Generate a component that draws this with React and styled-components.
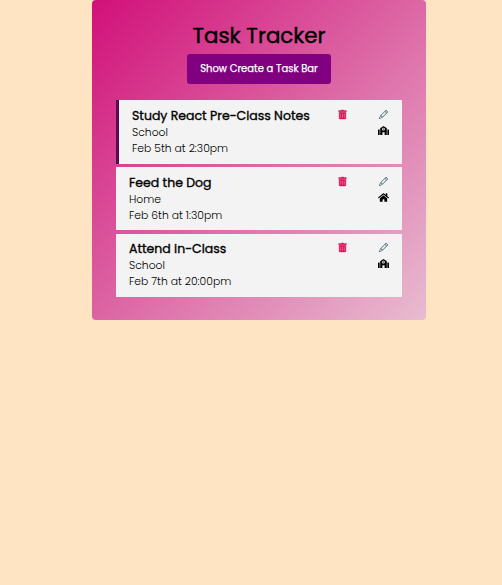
import React from "react";
import styled, { createGlobalStyle } from "styled-components";
import { FaTrashAlt, FaSchool, FaHome } from "react-icons/fa";
import { BsPencil } from "react-icons/bs";

const GlobalStyle = createGlobalStyle`
  * { box-sizing: border-box; }
  body {
    margin: 0;
    background: #ffe4c4;
    font-family: Poppins, Inter, sans-serif;
    color: #000;
  }
`;

const Container = styled.main`
  width: 334px;
  height: 320px;
  margin-left: 92px;
  padding: 20px 24px 0;
  border-radius: 4px;
  background: linear-gradient(135deg, #d11079 0%, #e8bcd0 100%);
`;

const Header = styled.header`
  display: flex;
  flex-direction: column;
  align-items: center;
  height: 80px;
`;

const Title = styled.h1`
  margin: 0;
  height: 34px;
  font-size: 21.4px;
  line-height: 32px;
  font-weight: 400;
  -webkit-text-stroke: 0.4px currentColor;
  white-space: nowrap;
`;

const ToggleButton = styled.button`
  width: 144px;
  height: 30px;
  padding: 0;
  border: 0;
  border-radius: 3px;
  background: #800080;
  color: #fff;
  font: 400 10px/30px Poppins, Inter, sans-serif;
  -webkit-text-stroke: 0.25px currentColor;
  white-space: nowrap;
`;

const TaskList = styled.section`
  display: flex;
  flex-direction: column;
`;

const TaskRow = styled.article`
  display: flex;
  height: ${(p) => (p.$reminder ? 64 : 63)}px;
  margin-bottom: ${(p) => (p.$reminder ? 3 : 4)}px;
  padding: 8px 13px;
  border-left: ${(p) => (p.$reminder ? "3px solid #5a0b50" : "0")};
  background: #f3f3f3;

  &:last-child {
    padding-top: 7px;
  }
`;

const Details = styled.div`
  flex: 1;
  white-space: nowrap;
`;

const TaskName = styled.h3`
  margin: 0 0 1px;
  font-size: 12.5px;
  line-height: 16px;
  font-weight: 400;
  -webkit-text-stroke: 0.35px currentColor;
`;

const Detail = styled.p`
  margin: 0;
  font-size: 10.8px;
  line-height: 16px;
  font-weight: 300;
  color: #000;
`;

const DeleteIcon = styled(FaTrashAlt)`
  width: 9px;
  height: 9px;
  margin: ${(p) => (p.$reminder ? 2 : 1.5)}px 31px 0 0;
  color: #dc1458;
  stroke: currentColor;
  stroke-width: 22px;
  overflow: visible;
`;

const Actions = styled.div`
  display: flex;
  flex-direction: column;
  align-items: center;
  gap: 6px;
  width: 11px;
  padding-top: 2px;
  svg { flex: none; }
`;

const EditIcon = styled(BsPencil)`
  width: 9px;
  height: 9px;
  color: #2c5563;
`;

const tasks = [
  { name: "Study React Pre-Class Notes", place: "School", time: "Feb 5th at 2:30pm", Icon: FaSchool, reminder: true },
  { name: "Feed the Dog", place: "Home", time: "Feb 6th at 1:30pm", Icon: FaHome },
  { name: "Attend in-Class", place: "School", time: "Feb 7th at 20:00pm", Icon: FaSchool },
];

function Task({ task }) {
  const { Icon } = task;
  return (
    <TaskRow $reminder={task.reminder}>
      <Details>
        <TaskName>{task.name}</TaskName>
        <Detail>{task.place}</Detail>
        <Detail>{task.time}</Detail>
      </Details>
      <DeleteIcon $reminder={task.reminder} />
      <Actions>
        <EditIcon />
        <Icon size={11} />
      </Actions>
    </TaskRow>
  );
}

export default function App() {
  return (
    <>
      <GlobalStyle />
      <Container>
        <Header>
          <Title>Task Tracker</Title>
          <ToggleButton>Show Create a Task Bar</ToggleButton>
        </Header>
        <TaskList>
          {tasks.map((task) => <Task key={task.name} task={task} />)}
        </TaskList>
      </Container>
    </>
  );
}
